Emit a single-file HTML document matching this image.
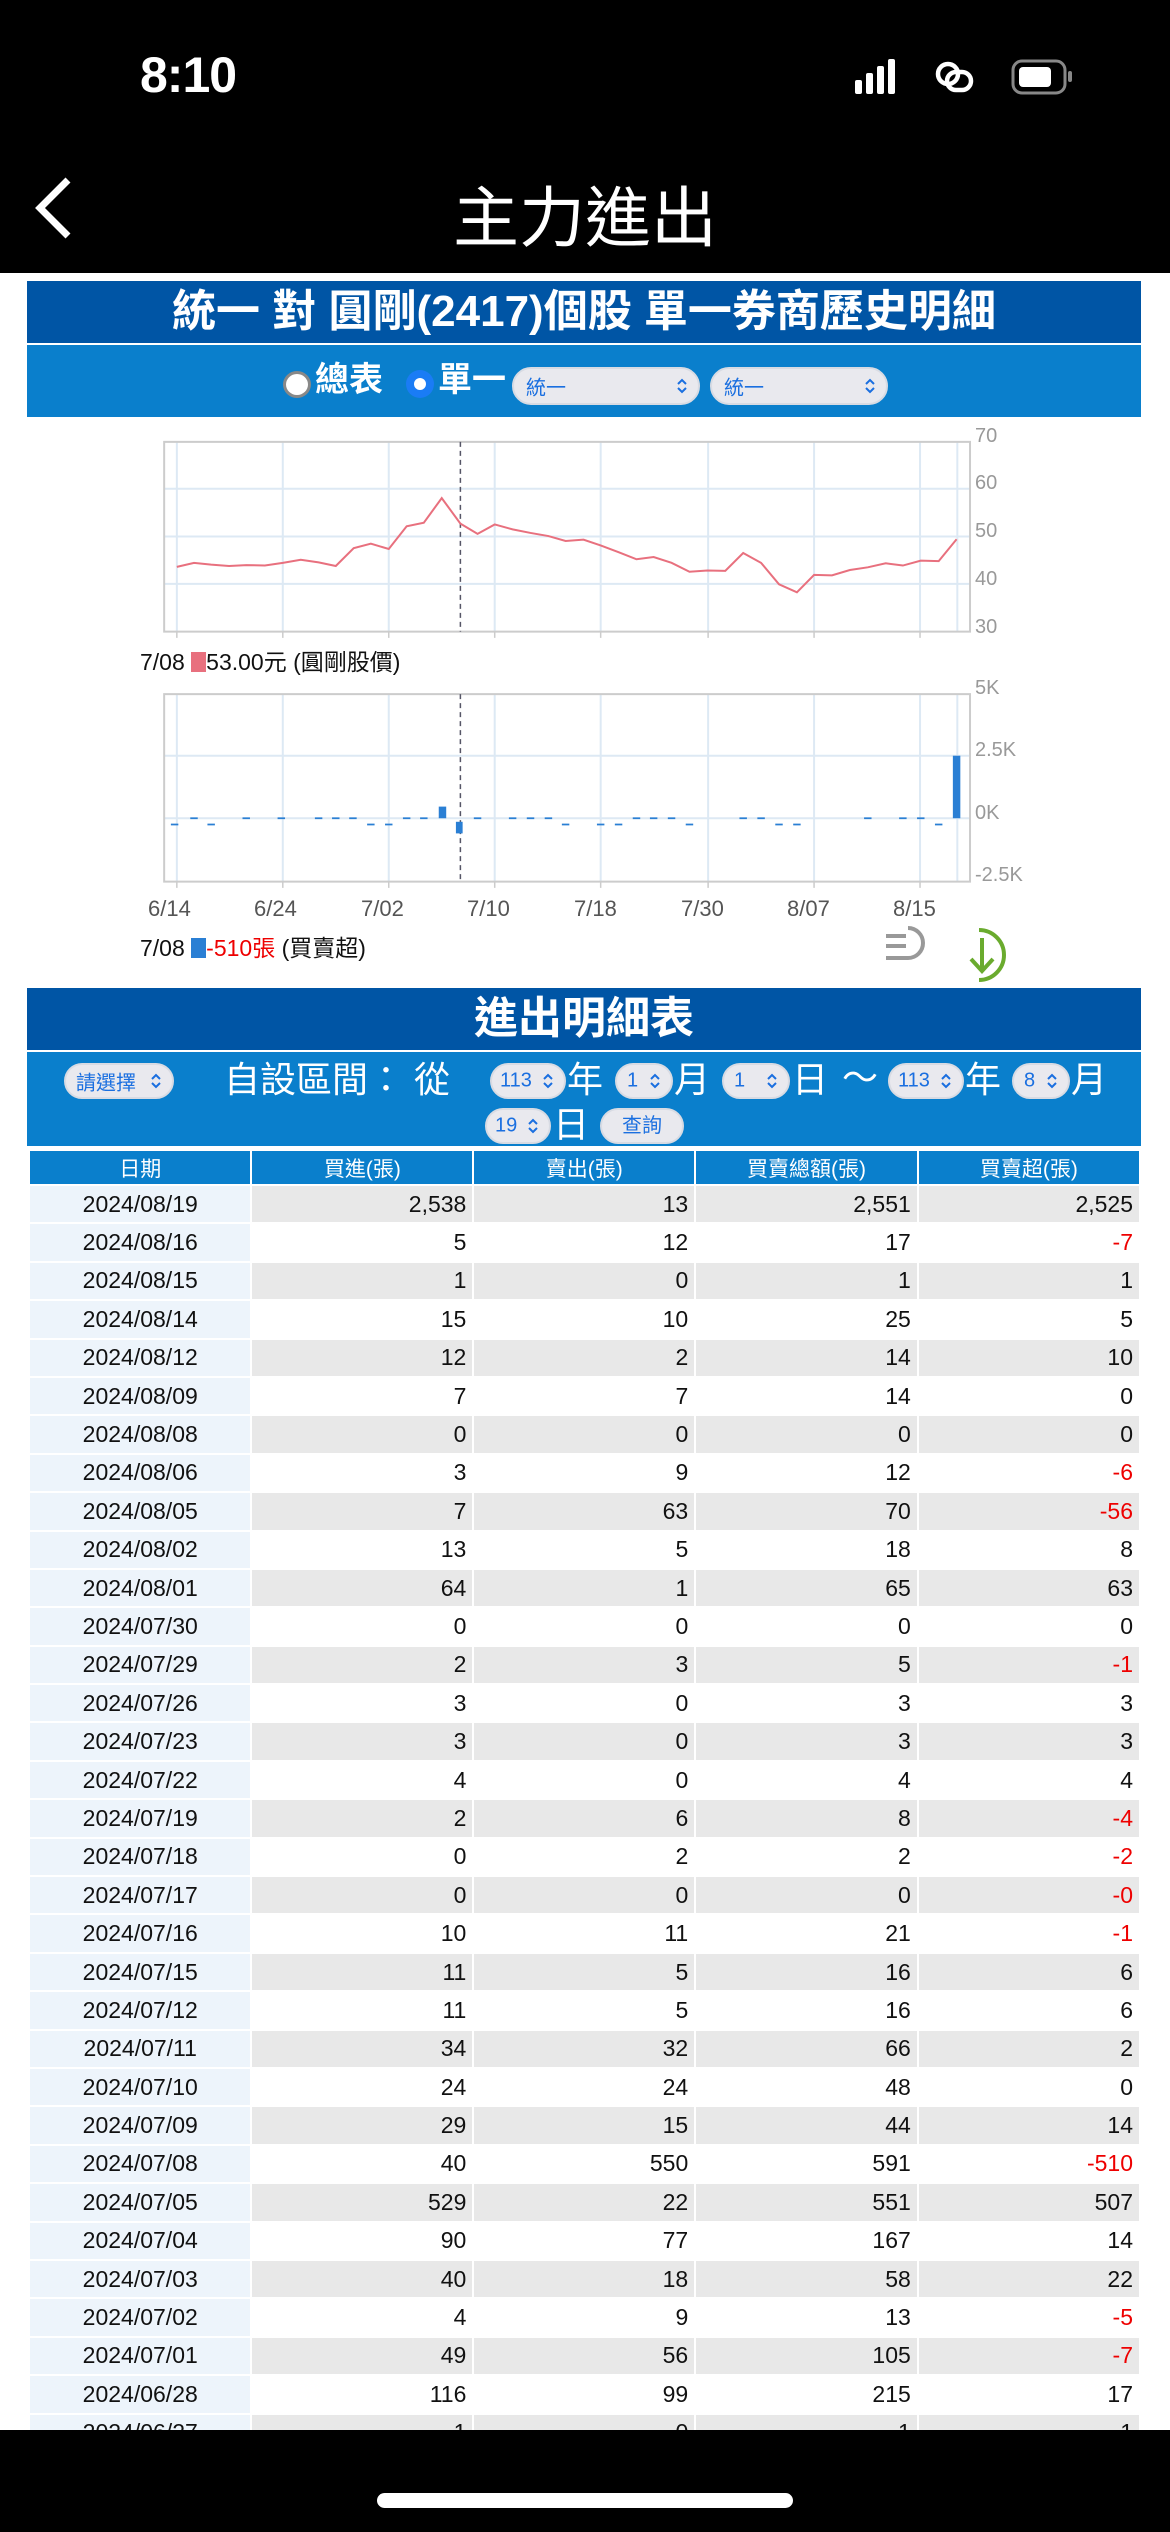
<!DOCTYPE html>
<html><head><meta charset="utf-8">
<style>
*{margin:0;padding:0;box-sizing:border-box}
body{width:1170px;height:2532px;background:#fff;position:relative;overflow:hidden;font-family:"Liberation Sans","Noto Sans CJK TC",sans-serif}
.abs{position:absolute}
.top{left:0;top:0;width:1170px;height:273px;background:#000}
.sel{position:absolute;background:#e9e9ee;border-radius:19px;color:#1a6fe0;font-size:20px;border:2px solid #d8dbe3}
.sel .t{position:absolute;left:12px;top:50%;transform:translateY(-50%)}
.sel svg{position:absolute;right:10px;top:50%;transform:translateY(-50%)}
.lbl{position:absolute;color:#fff;font-size:36px;line-height:36px}
table{position:absolute;left:28px;top:1149px;width:1113px;border-spacing:2px;border-collapse:separate;font-size:23px;color:#111}
td,th{height:36.4px;padding:0 6px;white-space:nowrap}
th{background:#0a7fcc;color:#fff;font-weight:normal;height:33px;font-size:21px}
td{text-align:right}
td.d{text-align:center;background:#edf4fb}
tr.g td{background:#e8e8e8}
tr.g td.d{background:#edf4fb}
.r{color:#e00}
.yl{position:absolute;color:#999;font-size:20px}
.xl{position:absolute;color:#555;font-size:22px;top:896px}
</style></head><body>
<div class="abs top"></div>
<div class="abs" style="left:140px;top:46px;color:#fff;font-size:50px;font-weight:bold;letter-spacing:-1px">8:10</div>
<svg class="abs" style="left:855px;top:58px" width="240" height="40" viewBox="0 0 240 40">
<rect x="0" y="22" width="7" height="14" rx="2" fill="#fff"/><rect x="11" y="15" width="7" height="21" rx="2" fill="#fff"/><rect x="22" y="8" width="7" height="28" rx="2" fill="#fff"/><rect x="33" y="1" width="7" height="35" rx="2" fill="#fff"/>
<rect x="83" y="6" width="20" height="20" rx="10" stroke="#fff" stroke-width="4.5" fill="none"/>
<rect x="92" y="14" width="24" height="18" rx="9" stroke="#fff" stroke-width="4.5" fill="none"/>
<rect x="158" y="3" width="52" height="32" rx="9" fill="none" stroke="#888" stroke-width="3"/><rect x="164" y="9" width="32" height="20" rx="4" fill="#fff"/><rect x="213" y="13" width="4" height="11" rx="2" fill="#888"/>
</svg>
<svg class="abs" style="left:28px;top:172px" width="50" height="70" viewBox="0 0 50 70"><path d="M40 8 L12 36 L40 64" stroke="#fff" stroke-width="7" fill="none"/></svg>
<div class="abs" style="left:0;width:1170px;top:165px;text-align:center;color:#fff;font-size:66px">主力進出</div>

<div class="abs" style="left:27px;top:281px;width:1114px;height:62px;background:#0055a5;color:#fff;font-size:44px;font-weight:bold;text-align:center;line-height:62px">統一 對 圓剛(2417)個股 單一券商歷史明細</div>
<div class="abs" style="left:27px;top:345px;width:1114px;height:72px;background:#0a7fcc"></div>
<div class="abs" style="left:283px;top:371px;width:28px;height:27px;border-radius:50%;background:#fff;border:3px solid #888"></div>
<div class="lbl" style="left:315px;top:362px;font-size:34px;font-weight:bold">總表</div>
<div class="abs" style="left:406px;top:370px;width:28px;height:28px;border-radius:50%;background:#1a7cf5"></div>
<div class="abs" style="left:414px;top:378px;width:12px;height:12px;border-radius:50%;background:#fff"></div>
<div class="lbl" style="left:438px;top:362px;font-size:34px;font-weight:bold">單一</div>
<div class="sel" style="left:512px;top:367px;width:188px;height:38px"><span class="t">統一</span><svg width="12" height="18" viewBox="0 0 12 18"><path d="M2 7 L6 3 L10 7 M2 11 L6 15 L10 11" stroke="#1a6fe0" stroke-width="2" fill="none"/></svg></div>
<div class="sel" style="left:710px;top:367px;width:178px;height:38px"><span class="t">統一</span><svg width="12" height="18" viewBox="0 0 12 18"><path d="M2 7 L6 3 L10 7 M2 11 L6 15 L10 11" stroke="#1a6fe0" stroke-width="2" fill="none"/></svg></div>

<svg class="abs" style="left:0;top:270px" width="1170" height="700" viewBox="0 0 1568 1568" preserveAspectRatio="none">
<g stroke="#dde9f4" stroke-width="2" fill="none">
<path vector-effect="non-scaling-stroke" d="M237 385V810M379 385V810M521 385V810M663 385V810M805 385V810M949 385V810M1091 385V810M1233 385V810M1283 385V810M220 490H1300M220 597H1300M220 703H1300"/>
<path vector-effect="non-scaling-stroke" d="M237 950V1370M379 950V1370M521 950V1370M663 950V1370M805 950V1370M949 950V1370M1091 950V1370M1233 950V1370M1283 950V1370M220 1088H1300M220 1228H1300"/>
</g>
<rect x="220" y="385" width="1080" height="425" fill="none" stroke="#ccc" stroke-width="2" vector-effect="non-scaling-stroke"/>
<rect x="220" y="950" width="1080" height="420" fill="none" stroke="#ccc" stroke-width="2" vector-effect="non-scaling-stroke"/>
<path d="M237 810v14M379 810v14M521 810v14M663 810v14M805 810v14M949 810v14M1091 810v14M1233 810v14M237 1370v14M379 1370v14M521 1370v14M663 1370v14M805 1370v14M949 1370v14M1091 1370v14M1233 1370v14" stroke="#ccc" stroke-width="1.5" vector-effect="non-scaling-stroke"/>
<path d="M617 385V810M617 950V1370" stroke="#556" stroke-width="1.5" stroke-dasharray="5 4" vector-effect="non-scaling-stroke"/>
<polyline fill="none" stroke="#e8707e" stroke-width="2" vector-effect="non-scaling-stroke" points="237,665 260,656 283,660 307,663 330,661 355,662 379,656 403,649 427,655 450,663 474,623 497,613 521,625 545,574 568,566 592,511 617,568 640,591 663,570 687,581 711,589 735,596 758,607 782,604 805,617 829,632 853,648 876,643 900,656 924,676 948,673 972,674 996,634 1020,656 1044,704 1068,722 1091,683 1115,684 1139,672 1163,666 1187,657 1210,662 1234,651 1258,652 1282,603"/>
<g fill="#2a7fd4">
<rect x="1277" y="1088" width="10" height="140"/>
<rect x="588" y="1202" width="10" height="26"/>
<rect x="611" y="1236" width="9" height="26"/>
<path d="M255 1226h10v4h-10zM325 1226h10v4h-10zM372 1226h10v4h-10zM422 1226h10v4h-10zM445 1226h10v4h-10zM468 1226h10v4h-10zM540 1226h10v4h-10zM563 1226h10v4h-10zM635 1226h10v4h-10zM682 1226h10v4h-10zM706 1226h10v4h-10zM730 1226h10v4h-10zM848 1226h10v4h-10zM871 1226h10v4h-10zM895 1226h10v4h-10zM991 1226h10v4h-10zM1015 1226h10v4h-10zM1158 1226h10v4h-10zM1205 1226h10v4h-10zM1229 1226h10v4h-10z"/>
<path d="M229 1240h10v4h-10zM278 1240h10v4h-10zM492 1240h10v4h-10zM516 1240h10v4h-10zM753 1240h10v4h-10zM800 1240h10v4h-10zM824 1240h10v4h-10zM919 1240h10v4h-10zM1039 1240h10v4h-10zM1063 1240h10v4h-10zM1253 1240h10v4h-10z"/>
</g>
</svg>
<div class="yl" style="left:975px;top:425px">70</div>
<div class="yl" style="left:975px;top:472px">60</div>
<div class="yl" style="left:975px;top:520px">50</div>
<div class="yl" style="left:975px;top:568px">40</div>
<div class="yl" style="left:975px;top:616px">30</div>
<div class="yl" style="left:975px;top:677px">5K</div>
<div class="yl" style="left:975px;top:739px">2.5K</div>
<div class="yl" style="left:975px;top:802px">0K</div>
<div class="yl" style="left:975px;top:864px">-2.5K</div>
<div class="xl" style="left:148px">6/14</div>
<div class="xl" style="left:254px">6/24</div>
<div class="xl" style="left:361px">7/02</div>
<div class="xl" style="left:467px">7/10</div>
<div class="xl" style="left:574px">7/18</div>
<div class="xl" style="left:681px">7/30</div>
<div class="xl" style="left:787px">8/07</div>
<div class="xl" style="left:893px">8/15</div>
<div class="abs" style="left:140px;top:643px;font-size:23px;color:#111">7/08 <span style="display:inline-block;width:15px;height:20px;background:#e8707e;vertical-align:-2px"></span>53.00元 (圓剛股價)</div>
<div class="abs" style="left:140px;top:929px;font-size:23px;color:#111">7/08 <span style="display:inline-block;width:15px;height:20px;background:#2a7fd4;vertical-align:-2px"></span><span style="color:#e00">-510張</span> (買賣超)</div>
<svg class="abs" style="left:884px;top:926px" width="140" height="60" viewBox="0 0 140 60">
<path d="M2 10 h20 M2 20 h20 M24 2 a15 15 0 0 1 0 30 h-22" stroke="#999" stroke-width="4" fill="none"/>
<path d="M95 4 a25 25 0 0 1 0 50" stroke="#6aab2e" stroke-width="4" fill="none"/>
<path d="M98 12 v32 M87 33 l11 12 l11 -12" stroke="#6aab2e" stroke-width="4" fill="none"/>
</svg>

<div class="abs" style="left:27px;top:988px;width:1114px;height:62px;background:#0055a5;color:#fff;font-size:44px;font-weight:bold;text-align:center;line-height:62px">進出明細表</div>
<div class="abs" style="left:27px;top:1052px;width:1114px;height:94px;background:#0a7fcc"></div>
<div class="sel" style="left:64px;top:1063px;width:110px;height:36px"><span class="t" style="left:10px">請選擇</span><svg width="12" height="18" viewBox="0 0 12 18"><path d="M2 7 L6 3 L10 7 M2 11 L6 15 L10 11" stroke="#1a6fe0" stroke-width="2" fill="none"/></svg></div>
<div class="lbl" style="left:224px;top:1062px">自設區間： 從</div>
<div class="sel" style="left:490px;top:1063px;width:76px;height:36px"><span class="t" style="left:8px">113</span><svg width="12" height="18" viewBox="0 0 12 18"><path d="M2 7 L6 3 L10 7 M2 11 L6 15 L10 11" stroke="#1a6fe0" stroke-width="2" fill="none"/></svg></div>
<div class="lbl" style="left:567px;top:1062px">年</div>
<div class="sel" style="left:615px;top:1063px;width:58px;height:36px"><span class="t" style="left:10px">1</span><svg width="12" height="18" viewBox="0 0 12 18"><path d="M2 7 L6 3 L10 7 M2 11 L6 15 L10 11" stroke="#1a6fe0" stroke-width="2" fill="none"/></svg></div>
<div class="lbl" style="left:674px;top:1062px">月</div>
<div class="sel" style="left:722px;top:1063px;width:68px;height:36px"><span class="t" style="left:10px">1</span><svg width="12" height="18" viewBox="0 0 12 18"><path d="M2 7 L6 3 L10 7 M2 11 L6 15 L10 11" stroke="#1a6fe0" stroke-width="2" fill="none"/></svg></div>
<div class="lbl" style="left:792px;top:1062px">日</div>
<div class="lbl" style="left:842px;top:1060px">～</div>
<div class="sel" style="left:888px;top:1063px;width:76px;height:36px"><span class="t" style="left:8px">113</span><svg width="12" height="18" viewBox="0 0 12 18"><path d="M2 7 L6 3 L10 7 M2 11 L6 15 L10 11" stroke="#1a6fe0" stroke-width="2" fill="none"/></svg></div>
<div class="lbl" style="left:965px;top:1062px">年</div>
<div class="sel" style="left:1012px;top:1063px;width:58px;height:36px"><span class="t" style="left:10px">8</span><svg width="12" height="18" viewBox="0 0 12 18"><path d="M2 7 L6 3 L10 7 M2 11 L6 15 L10 11" stroke="#1a6fe0" stroke-width="2" fill="none"/></svg></div>
<div class="lbl" style="left:1071px;top:1062px">月</div>
<div class="sel" style="left:485px;top:1108px;width:66px;height:36px"><span class="t" style="left:8px">19</span><svg width="12" height="18" viewBox="0 0 12 18"><path d="M2 7 L6 3 L10 7 M2 11 L6 15 L10 11" stroke="#1a6fe0" stroke-width="2" fill="none"/></svg></div>
<div class="lbl" style="left:553px;top:1107px">日</div>
<div class="sel" style="left:600px;top:1108px;width:84px;height:36px;text-align:center;line-height:32px">查詢</div>

<table>
<colgroup><col style="width:222px"><col style="width:222px"><col style="width:222px"><col style="width:222px"><col style="width:222px"></colgroup>
<tr><th>日期</th><th>買進(張)</th><th>賣出(張)</th><th>買賣總額(張)</th><th>買賣超(張)</th></tr>
<tr class="g"><td class="d">2024/08/19</td><td>2,538</td><td>13</td><td>2,551</td><td>2,525</td></tr>
<tr><td class="d">2024/08/16</td><td>5</td><td>12</td><td>17</td><td class="r">-7</td></tr>
<tr class="g"><td class="d">2024/08/15</td><td>1</td><td>0</td><td>1</td><td>1</td></tr>
<tr><td class="d">2024/08/14</td><td>15</td><td>10</td><td>25</td><td>5</td></tr>
<tr class="g"><td class="d">2024/08/12</td><td>12</td><td>2</td><td>14</td><td>10</td></tr>
<tr><td class="d">2024/08/09</td><td>7</td><td>7</td><td>14</td><td>0</td></tr>
<tr class="g"><td class="d">2024/08/08</td><td>0</td><td>0</td><td>0</td><td>0</td></tr>
<tr><td class="d">2024/08/06</td><td>3</td><td>9</td><td>12</td><td class="r">-6</td></tr>
<tr class="g"><td class="d">2024/08/05</td><td>7</td><td>63</td><td>70</td><td class="r">-56</td></tr>
<tr><td class="d">2024/08/02</td><td>13</td><td>5</td><td>18</td><td>8</td></tr>
<tr class="g"><td class="d">2024/08/01</td><td>64</td><td>1</td><td>65</td><td>63</td></tr>
<tr><td class="d">2024/07/30</td><td>0</td><td>0</td><td>0</td><td>0</td></tr>
<tr class="g"><td class="d">2024/07/29</td><td>2</td><td>3</td><td>5</td><td class="r">-1</td></tr>
<tr><td class="d">2024/07/26</td><td>3</td><td>0</td><td>3</td><td>3</td></tr>
<tr class="g"><td class="d">2024/07/23</td><td>3</td><td>0</td><td>3</td><td>3</td></tr>
<tr><td class="d">2024/07/22</td><td>4</td><td>0</td><td>4</td><td>4</td></tr>
<tr class="g"><td class="d">2024/07/19</td><td>2</td><td>6</td><td>8</td><td class="r">-4</td></tr>
<tr><td class="d">2024/07/18</td><td>0</td><td>2</td><td>2</td><td class="r">-2</td></tr>
<tr class="g"><td class="d">2024/07/17</td><td>0</td><td>0</td><td>0</td><td class="r">-0</td></tr>
<tr><td class="d">2024/07/16</td><td>10</td><td>11</td><td>21</td><td class="r">-1</td></tr>
<tr class="g"><td class="d">2024/07/15</td><td>11</td><td>5</td><td>16</td><td>6</td></tr>
<tr><td class="d">2024/07/12</td><td>11</td><td>5</td><td>16</td><td>6</td></tr>
<tr class="g"><td class="d">2024/07/11</td><td>34</td><td>32</td><td>66</td><td>2</td></tr>
<tr><td class="d">2024/07/10</td><td>24</td><td>24</td><td>48</td><td>0</td></tr>
<tr class="g"><td class="d">2024/07/09</td><td>29</td><td>15</td><td>44</td><td>14</td></tr>
<tr><td class="d">2024/07/08</td><td>40</td><td>550</td><td>591</td><td class="r">-510</td></tr>
<tr class="g"><td class="d">2024/07/05</td><td>529</td><td>22</td><td>551</td><td>507</td></tr>
<tr><td class="d">2024/07/04</td><td>90</td><td>77</td><td>167</td><td>14</td></tr>
<tr class="g"><td class="d">2024/07/03</td><td>40</td><td>18</td><td>58</td><td>22</td></tr>
<tr><td class="d">2024/07/02</td><td>4</td><td>9</td><td>13</td><td class="r">-5</td></tr>
<tr class="g"><td class="d">2024/07/01</td><td>49</td><td>56</td><td>105</td><td class="r">-7</td></tr>
<tr><td class="d">2024/06/28</td><td>116</td><td>99</td><td>215</td><td>17</td></tr>
<tr class="g"><td class="d">2024/06/27</td><td>1</td><td>0</td><td>1</td><td>1</td></tr>
</table>
<div class="abs" style="left:0;top:2430px;width:1170px;height:102px;background:#000"></div>
<div class="abs" style="left:377px;top:2493px;width:416px;height:15px;border-radius:8px;background:#fff"></div>
</body></html>
